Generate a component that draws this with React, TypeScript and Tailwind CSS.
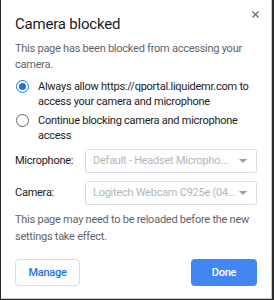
import { X } from "lucide-react";

function Radio({ checked }: { checked?: boolean }) {
  return (
    <span
      className={
        "mt-[1px] flex h-[13px] w-[13px] shrink-0 items-center justify-center rounded-full border-[1.5px] " +
        (checked ? "border-[#1a73e8]" : "border-[#5f6368]")
      }
    >
      {checked && <span className="h-[7px] w-[7px] rounded-full bg-[#1a73e8]" />}
    </span>
  );
}

function Select({ value }: { value: string }) {
  return (
    <div className="flex h-[24px] w-[172px] items-center justify-between overflow-hidden whitespace-nowrap rounded-[3px] border border-[#dadce0] pl-[7px] pr-[9px] text-[#b5b5b5]">
      <span>{value}</span>
      <span className="h-0 w-0 border-x-[4px] border-t-[4px] border-x-transparent border-t-[#9aa0a6]" />
    </div>
  );
}

export default function App() {
  return (
    <div
      className="flex h-[300px] w-[274px] bg-[#2b2b2b] pl-px pr-[2px] pb-px"
      style={{ fontFamily: 'Roboto, "Noto Sans", sans-serif' }}
    >
      <div className="relative flex-1 border-r border-b border-[#c8c8c8] bg-white px-[14px] pt-[14px] text-[11px] leading-[16px] tracking-[-0.25px] text-[#5f6368]">
        <X className="absolute right-[10px] top-[9px] h-[11px] w-[11px] text-[#5f6368]" strokeWidth={2.5} />
        <h1 className="text-[15px] leading-[20px] tracking-[-0.2px] text-[#202124]">Camera blocked</h1>
        <p className="mt-[7px] pr-[10px]">This page has been blocked from accessing your camera.</p>

        <div className="mt-[6px] flex flex-col gap-[4px] pl-[1px] leading-[15px] text-[#202124]">
          <label className="flex gap-[9px]">
            <Radio checked />
            <span>Always allow https://qportal.liquidemr.com to access your camera and microphone</span>
          </label>
          <label className="flex gap-[9px]">
            <Radio />
            <span className="pr-[8px]">Continue blocking camera and microphone access</span>
          </label>
        </div>

        <div className="mt-[6px] grid grid-cols-[70px_1fr] items-center gap-y-[8px] text-[#202124]">
          <span>Microphone:</span>
          <Select value="Default - Headset Micropho..." />
          <span>Camera:</span>
          <Select value="Logitech Webcam C925e (04..." />
        </div>

        <p className="mt-[6px] leading-[17px]">This page may need to be reloaded before the new settings take effect.</p>

        <div className="mt-[14px] flex justify-between">
          <button className="h-[27px] w-[65px] rounded-[4px] border border-[#dadce0] font-medium text-[#1a73e8]">
            Manage
          </button>
          <button className="h-[27px] w-[66px] rounded-[4px] bg-[#4285f4] font-medium text-white">
            Done
          </button>
        </div>
      </div>
    </div>
  );
}
